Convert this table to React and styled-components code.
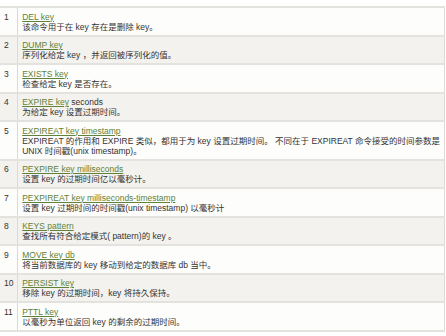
import React from 'react';
import styled, { createGlobalStyle } from 'styled-components';

const GlobalStyle = createGlobalStyle`
  body {
    margin: 0;
    background: #ffffff;
    font-family: "Liberation Sans", "Noto Sans CJK SC", sans-serif;
  }
`;

const Wrapper = styled.div`
  padding-top: 6px;
  width: 445px;
`;

const Table = styled.table`
  width: 100%;
  border-collapse: collapse;
  border-top: 2px solid #e4e2de;
  border-right: 1px solid #dcdad6;
  font-size: 8.5px;
  line-height: 10px;
  color: #333333;
`;

const Row = styled.tr`
  background: ${(p) => (p.$even ? '#f4f2ee' : '#fdfdfb')};
  border-bottom: 2px solid #e4e2de;
`;

const NumCell = styled.td`
  width: 16px;
  padding: 3.5px 0 3px 4px;
  vertical-align: top;
  border-right: 1px solid #dcdad6;
  color: #333333;
`;

const Cell = styled.td`
  padding: 3.5px 4px 3px 4px;
  vertical-align: top;
`;

const Line = styled.div`
  height: 10px;
  line-height: 10px;
  white-space: nowrap;
`;

const Cmd = styled.a`
  color: #5e8239;
  text-decoration: underline;
`;

const rows = [
  { cmd: 'DEL key', desc: ['该命令用于在 key 存在是删除 key。'] },
  { cmd: 'DUMP key', desc: ['序列化给定 key ，并返回被序列化的值。'] },
  { cmd: 'EXISTS key', desc: ['检查给定 key 是否存在。'] },
  { cmd: 'EXPIRE key', extra: ' seconds', desc: ['为给定 key 设置过期时间。'] },
  {
    cmd: 'EXPIREAT key timestamp',
    desc: [
      'EXPIREAT 的作用和 EXPIRE 类似，都用于为 key 设置过期时间。 不同在于 EXPIREAT 命令接受的时间参数是',
      'UNIX 时间戳(unix timestamp)。',
    ],
  },
  { cmd: 'PEXPIRE key milliseconds', desc: ['设置 key 的过期时间亿以毫秒计。'] },
  { cmd: 'PEXPIREAT key milliseconds-timestamp', desc: ['设置 key 过期时间的时间戳(unix timestamp) 以毫秒计'] },
  { cmd: 'KEYS pattern', desc: ['查找所有符合给定模式( pattern)的 key 。'] },
  { cmd: 'MOVE key db', desc: ['将当前数据库的 key 移动到给定的数据库 db 当中。'] },
  { cmd: 'PERSIST key', desc: ['移除 key 的过期时间，key 将持久保持。'] },
  { cmd: 'PTTL key', desc: ['以毫秒为单位返回 key 的剩余的过期时间。'] },
];

export default function App() {
  return (
    <Wrapper>
      <GlobalStyle />
      <Table>
        <tbody>
          {rows.map((r, i) => (
            <Row key={i} $even={i % 2 === 1}>
              <NumCell>
                <Line>{i + 1}</Line>
              </NumCell>
              <Cell>
                <Line>
                  <Cmd>{r.cmd}</Cmd>
                  {r.extra}
                </Line>
                {r.desc.map((d, j) => (
                  <Line key={j}>{d}</Line>
                ))}
              </Cell>
            </Row>
          ))}
        </tbody>
      </Table>
    </Wrapper>
  );
}
